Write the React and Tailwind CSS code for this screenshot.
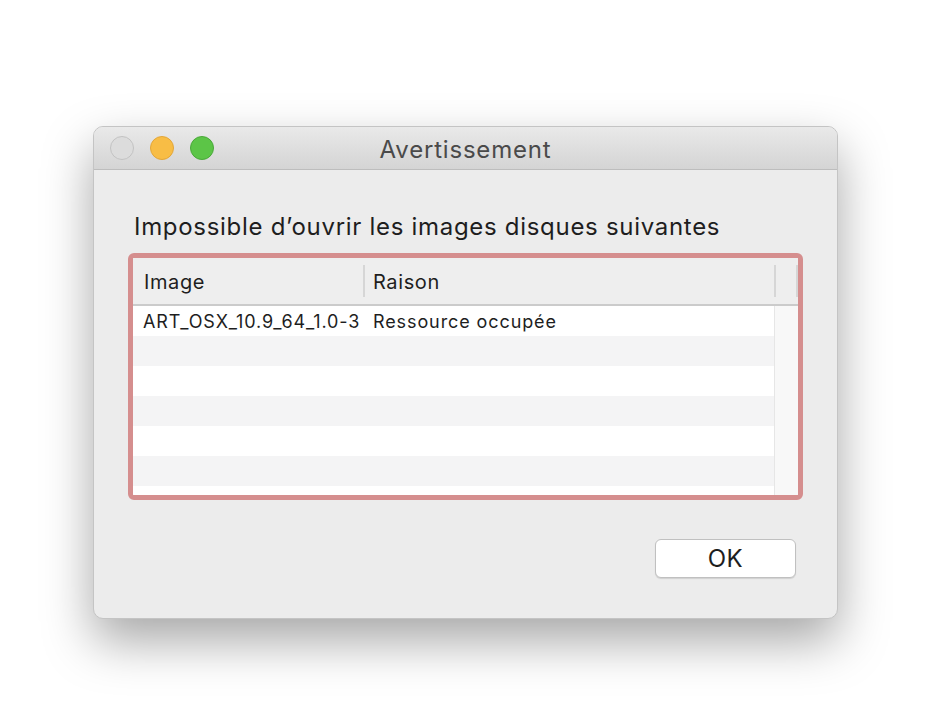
export default function App() {
  const rows = [0, 1, 2, 3, 4, 5, 6];
  return (
    <div className="w-[948px] h-[716px] bg-white overflow-hidden pt-[126px] pl-[93px]" style={{ fontFamily: "Inter, 'Liberation Sans', sans-serif" }}>
      <div className="w-[745px] h-[493px] rounded-[10px] bg-[#ececec] border border-[#c4c4c4] shadow-[0_22px_50px_rgba(0,0,0,0.35)] flex flex-col overflow-hidden">
        <div className="h-[43px] shrink-0 relative flex items-center justify-center bg-gradient-to-b from-[#e9e9e9] to-[#d4d4d4] border-b border-[#bdbdbd]">
          <div className="absolute left-[16px] top-[9px] flex gap-[16px]">
            <div className="w-[24px] h-[24px] rounded-full bg-[#dcdcdc] border border-[#c2c2c2]" />
            <div className="w-[24px] h-[24px] rounded-full bg-[#f8bd45] border border-[#e2a63a]" />
            <div className="w-[24px] h-[24px] rounded-full bg-[#5cc547] border border-[#4aa83a]" />
          </div>
          <div className="text-[24px] text-[#4a4a4a] tracking-[0.8px] mt-[3px]">Avertissement</div>
        </div>
        <div className="flex-1 flex flex-col px-[34px] pt-[41px]">
          <div className="text-[24px] text-[#1e1e1e] leading-[32px] pl-[6px] tracking-[0.7px] whitespace-nowrap">Impossible d’ouvrir les images disques suivantes</div>
          <div className="mt-[10px] w-[675px] h-[247px] border-[5px] border-[#d58e8e] rounded-[6px] bg-white flex overflow-hidden">
            <div className="flex-1 flex flex-col">
              <div className="h-[48px] shrink-0 flex bg-[#eeeeee] border-b-2 border-[#cbcbcb]">
                <div className="w-[232px] flex items-center pl-[11px] text-[20px] tracking-[0.6px] text-[#1e1e1e] border-r-2 border-[#d6d6d6] my-[7px] pt-[1px]">Image</div>
                <div className="flex-1 flex items-center pl-[8px] text-[20px] tracking-[0.6px] text-[#1e1e1e] pt-[1px]">Raison</div>
              </div>
              {rows.map((i) => (
                <div key={i} className={`h-[30px] shrink-0 flex items-center text-[18px] tracking-[0.9px] text-[#1e1e1e] ${i % 2 === 0 ? "bg-white" : "bg-[#f4f4f5]"}`}>
                  {i === 0 && (
                    <>
                      <div className="w-[229px] shrink-0 pl-[10px] overflow-hidden whitespace-nowrap">ART_OSX_10.9_64_1.0-3</div>
                      <div className="pl-[11px] whitespace-nowrap">Ressource occupée</div>
                    </>
                  )}
                </div>
              ))}
            </div>
            <div className="w-[24px] shrink-0 flex flex-col">
              <div className="h-[48px] shrink-0 bg-[#eeeeee] border-b-2 border-[#cbcbcb] flex justify-between py-[7px]">
                <div className="w-[2px] bg-[#d6d6d6]" />
                <div className="w-[2px] bg-[#d6d6d6]" />
              </div>
              <div className="flex-1 bg-[#f8f8f8] border-l border-[#e6e6e6]" />
            </div>
          </div>
          <div className="flex justify-end mt-[39px] pr-[7px]">
            <div className="w-[141px] h-[39px] rounded-[6px] bg-white border border-[#c0c0c0] shadow-[0_1px_1px_rgba(0,0,0,0.12)] flex items-center justify-center text-[24px] tracking-[0.5px] text-[#1e1e1e]">OK</div>
          </div>
        </div>
      </div>
    </div>
  );
}
